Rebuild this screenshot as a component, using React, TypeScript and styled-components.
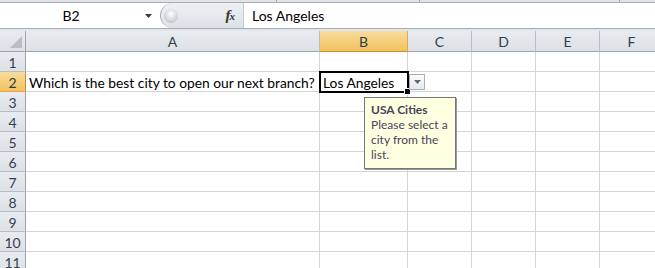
import React from 'react'
import styled, { createGlobalStyle } from 'styled-components'

const GlobalStyle = createGlobalStyle`
  html, body {
    margin: 0;
    padding: 0;
    background: #ffffff;
  }
  body {
    font-family: Lato, 'Liberation Sans', sans-serif;
  }
`

const COLUMNS = [
  { name: 'A', width: 294 },
  { name: 'B', width: 88 },
  { name: 'C', width: 64 },
  { name: 'D', width: 64 },
  { name: 'E', width: 64 },
  { name: 'F', width: 64 },
]

const STRIP_SEGMENTS = [277, 143, 200]

const ROW_COUNT = 11
const ACTIVE_COL = 'B'
const ACTIVE_ROW = 2

export default function App() {
  return (
    <>
      <GlobalStyle />
      <Window>
        <TopStrip>
          {STRIP_SEGMENTS.map((w, i) => (
            <StripSegment key={i} $width={w} />
          ))}
        </TopStrip>
        <FormulaBar>
          <NameBox>B2</NameBox>
          <NameArrow>
            <svg width="7" height="4" viewBox="0 0 7 4">
              <path d="M0 0 H7 L3.5 4 Z" fill="#3c3c3c" />
            </svg>
          </NameArrow>
          <Splitter>
            <Knob />
            <Fx>
              f<sub>x</sub>
            </Fx>
          </Splitter>
          <FormulaInput>Los Angeles</FormulaInput>
        </FormulaBar>
        <BarGap />
        <Sheet>
          <Corner>
            <svg width="12" height="12" viewBox="0 0 12 12">
              <path d="M12 0 V12 H0 Z" fill="#b9bec6" />
            </svg>
          </Corner>
          {COLUMNS.map((c) => (
            <ColHeader key={c.name} $active={c.name === ACTIVE_COL}>
              {c.name}
            </ColHeader>
          ))}
          {Array.from({ length: ROW_COUNT }, (_, i) => i + 1).map((row) => (
            <React.Fragment key={row}>
              <RowHeader $active={row === ACTIVE_ROW}>{row}</RowHeader>
              {COLUMNS.map((c) => {
                if (row === 2 && c.name === 'A') {
                  return <Cell key={c.name}>Which is the best city to open our next branch?</Cell>
                }
                if (row === 2 && c.name === 'B') {
                  return (
                    <ActiveCell key={c.name}>
                      Los Angeles
                      <Selection>
                        <FillHandle />
                      </Selection>
                      <ListButton>
                        <svg width="7" height="4" viewBox="0 0 7 4">
                          <path d="M0 0 H7 L3.5 4 Z" fill="#5e6670" />
                        </svg>
                      </ListButton>
                      <InputMessage>
                        <MessageTitle>USA Cities</MessageTitle>
                        Please select a city from the list.
                      </InputMessage>
                    </ActiveCell>
                  )
                }
                return <Cell key={c.name} />
              })}
            </React.Fragment>
          ))}
        </Sheet>
      </Window>
    </>
  )
}

const Window = styled.div`
  width: 655px;
  height: 268px;
  overflow: hidden;
  background: #ffffff;
  font-family: Lato, 'Liberation Sans', sans-serif;
  color: #000000;
`

const TopStrip = styled.div`
  display: flex;
  height: 2px;
  background: #dfe3e8;
  border-bottom: 1px solid #a9b0b8;
`

const StripSegment = styled.div<{ $width: number }>`
  flex: 0 0 ${(p) => p.$width}px;
  box-sizing: border-box;
  border-right: 1px solid #a9b0b8;
`

const FormulaBar = styled.div`
  display: flex;
  height: 25px;
  background: #ffffff;
  border-bottom: 1px solid #a5acb5;
`

const NameBox = styled.div`
  width: 142px;
  display: flex;
  align-items: center;
  justify-content: center;
  font-size: 14px;
  color: #000000;
`

const NameArrow = styled.div`
  width: 18px;
  display: flex;
  align-items: center;
  padding-left: 3px;
  box-sizing: border-box;
`

const Splitter = styled.div`
  width: 84px;
  display: flex;
  align-items: center;
  justify-content: space-between;
  padding: 0 8px 0 3px;
  box-sizing: border-box;
  background: linear-gradient(#eef0f3, #dde1e6);
  border-left: 1px solid #a5acb5;
  border-right: 1px solid #c4c9cf;
  border-radius: 13px 0 0 13px;
`

const Knob = styled.div`
  width: 14px;
  height: 14px;
  border-radius: 50%;
  background: radial-gradient(circle at 50% 35%, #ffffff, #c7ccd3 70%, #aeb4bc);
`

const Fx = styled.div`
  font-family: 'Liberation Serif', serif;
  font-style: italic;
  font-weight: bold;
  font-size: 15px;
  color: #333333;
  line-height: 1;

  sub {
    font-size: 11px;
    vertical-align: baseline;
    margin-left: -1px;
  }
`

const FormulaInput = styled.div`
  flex: 1;
  display: flex;
  align-items: center;
  padding-left: 8px;
  font-size: 14px;
`

const BarGap = styled.div`
  height: 2px;
  background: #e2e5e9;
`

const Sheet = styled.div`
  display: grid;
  grid-template-columns: 26px ${COLUMNS.map((c) => `${c.width}px`).join(' ')};
  grid-template-rows: 21px;
  grid-auto-rows: 20px;
`

const HeaderBase = styled.div<{ $active?: boolean }>`
  box-sizing: border-box;
  display: flex;
  align-items: center;
  justify-content: center;
  font-size: 14px;
  color: ${(p) => (p.$active ? '#2e3a4a' : '#36404c')};
  background: ${(p) =>
    p.$active ? 'linear-gradient(#f9dc9c, #f2c25e)' : 'linear-gradient(#e8ebef, #dde1e6)'};
`

const Corner = styled(HeaderBase)`
  align-items: flex-end;
  justify-content: flex-end;
  padding: 0 3px 3px 0;
  border-right: 1px solid #9ea5ae;
  border-bottom: 1px solid #9ea5ae;
`

const ColHeader = styled(HeaderBase)`
  border-right: 1px solid ${(p) => (p.$active ? '#e2a84c' : '#b8bdc4')};
  border-bottom: 1px solid ${(p) => (p.$active ? '#c8912e' : '#9ea5ae')};
`

const RowHeader = styled(HeaderBase)`
  padding-top: 1px;
  border-right: 1px solid ${(p) => (p.$active ? '#c8912e' : '#9ea5ae')};
  border-bottom: 1px solid ${(p) => (p.$active ? '#e2a84c' : '#b8bdc4')};
`

const Cell = styled.div`
  box-sizing: border-box;
  display: flex;
  align-items: center;
  padding: 1px 0 0 3px;
  font-size: 13.8px;
  white-space: nowrap;
  border-right: 1px solid #d4d4d4;
  border-bottom: 1px solid #d4d4d4;
`

const ActiveCell = styled(Cell)`
  position: relative;
  z-index: 2;
`

const Selection = styled.div`
  position: absolute;
  left: -1px;
  top: -1px;
  right: -2px;
  bottom: -2px;
  border: 2px solid #000000;
  pointer-events: none;
`

const FillHandle = styled.div`
  position: absolute;
  right: -4px;
  bottom: -4px;
  width: 5px;
  height: 5px;
  background: #000000;
  border: 1px solid #ffffff;
`

const ListButton = styled.div`
  position: absolute;
  left: 89px;
  top: 2px;
  width: 16px;
  height: 16px;
  box-sizing: border-box;
  display: flex;
  align-items: center;
  justify-content: center;
  background: linear-gradient(#fafbfc, #e6e9ed);
  border: 1px solid #a8aeb6;
`

const InputMessage = styled.div`
  position: absolute;
  left: 44px;
  top: 25px;
  width: 92px;
  height: 72px;
  box-sizing: border-box;
  padding: 4px 3px 0 6px;
  background: #ffffe1;
  border: 1px solid #767676;
  box-shadow: 1px 1px 0 #9a9a9a;
  font-size: 12px;
  line-height: 15px;
  color: #4a4458;
  white-space: normal;
`

const MessageTitle = styled.div`
  font-weight: bold;
`
